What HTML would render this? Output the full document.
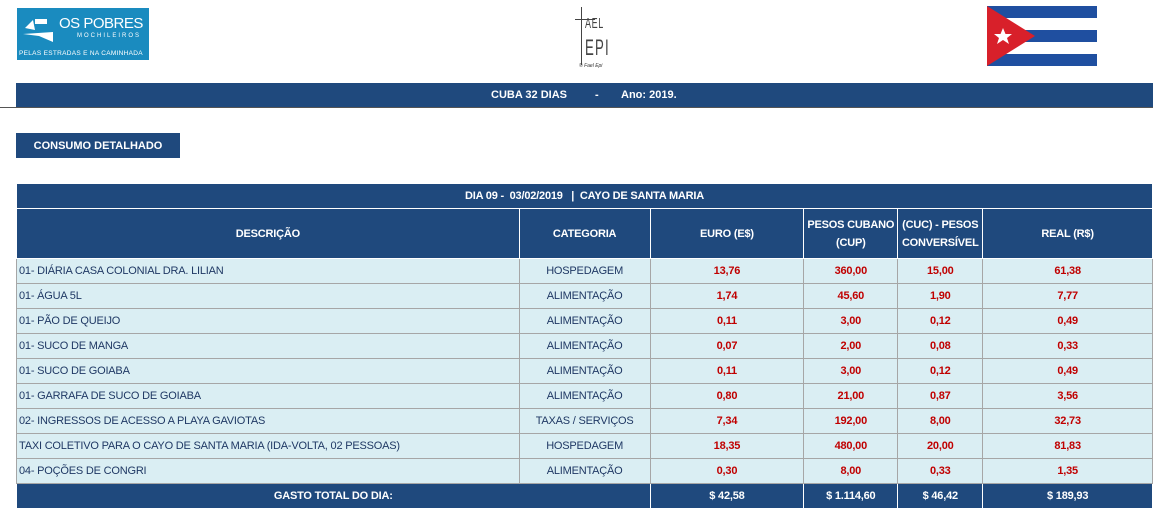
<!DOCTYPE html>
<html><head><meta charset="utf-8"><style>
body{margin:0;width:1153px;height:508px;background:#fff;position:relative;overflow:hidden;font-family:"Liberation Sans",sans-serif;font-size:11px;}
.abs{position:absolute}
.band{background:#1f497d;color:#fff;font-weight:bold;}
table{position:absolute;left:16px;top:183px;border-collapse:collapse;table-layout:fixed;}
td{border:1px solid #a6a6a6;height:24px;padding:0;color:#1f3864;text-align:center;white-space:nowrap;overflow:hidden;letter-spacing:-0.2px}
tr.d td{background:#daeef3}
tr.d td:first-child{text-align:left;padding-left:2px}
td.r{color:#c00000;font-weight:bold}
tr.h td{background:#1f497d;color:#fff;font-weight:bold;border-color:#fff}
</style></head><body>
<div class="abs" style="left:17px;top:8px;width:132px;height:52px;background:#1a8bbf;color:#fff">
 <svg class="abs" style="left:4px;top:8px" width="36" height="28"><polygon points="4,12 12,4 14,14" fill="#fff"/><rect x="14" y="3" width="12" height="5" fill="#fff"/><polygon points="2,18 32,16 32,26 18,20" fill="#fff"/></svg>
 <div class="abs" style="left:42px;top:7px;font-size:15px;letter-spacing:-0.5px">OS POBRES</div>
 <div class="abs" style="left:60px;top:25px;font-size:6px;letter-spacing:2px">MOCHILEIROS</div>
 <div class="abs" style="left:2px;top:42px;font-size:6.5px;letter-spacing:0.3px">PELAS ESTRADAS E NA CAMINHADA</div>
</div>
<div class="abs" style="left:575px;top:5px;width:40px;height:68px">
 <div class="abs" style="left:6px;top:2px;width:1px;height:58px;background:#444"></div>
 <div class="abs" style="left:0;top:14px;width:20px;height:1px;background:#444"></div>
 <div class="abs" style="left:10px;top:10px;font-size:15px;color:#444;letter-spacing:1px;font-weight:100;transform:scaleX(.6);transform-origin:left">AEL</div>
 <div class="abs" style="left:10px;top:30px;font-size:22px;color:#444;letter-spacing:2px;transform:scaleX(.6);transform-origin:left">EPI</div>
 <div class="abs" style="left:4px;top:58px;font-size:5px;color:#333;font-style:italic">© Fael Epi</div>
</div>
<svg class="abs" style="left:987px;top:6px" width="110" height="60" viewBox="0 0 110 60">
 <rect width="110" height="60" fill="#fff"/>
 <rect y="0" width="110" height="12" fill="#1f4fa0"/><rect y="24" width="110" height="12" fill="#1f4fa0"/><rect y="48" width="110" height="12" fill="#1f4fa0"/>
 <polygon points="0,0 48,30 0,60" fill="#d8202a"/>
 <polygon points="16,22 18.5,28 25,28 20,32 22,38 16,34 10,38 12,32 7,28 13.5,28" fill="#fff"/>
</svg>
<div class="abs band" style="left:16px;top:83px;width:1137px;height:24px;line-height:25px">
 <span class="abs" style="left:475px">CUBA 32 DIAS</span><span class="abs" style="left:579px">-</span><span class="abs" style="left:605px">Ano: 2019.</span>
</div>
<div class="abs" style="left:0;top:107px;width:1153px;height:1px;background:#555"></div>
<div class="abs band" style="left:16px;top:133px;width:164px;height:25px;line-height:26px;text-align:center">CONSUMO DETALHADO</div>
<table>
<colgroup><col style="width:503px"><col style="width:131px"><col style="width:154px"><col style="width:94px"><col style="width:85px"><col style="width:170px"></colgroup>
<tr class="h"><td colspan="6">DIA 09 -&nbsp; 03/02/2019 &nbsp; | &nbsp;CAYO DE SANTA MARIA</td></tr>
<tr class="h"><td style="height:49px">DESCRIÇÃO</td><td>CATEGORIA</td><td>EURO (E$)</td><td style="line-height:18px">PESOS CUBANO<br>(CUP)</td><td style="line-height:18px">(CUC) - PESOS<br>CONVERSÍVEL</td><td>REAL (R$)</td></tr>
<tr class="d"><td>01- DIÁRIA CASA COLONIAL DRA. LILIAN</td><td>HOSPEDAGEM</td><td class="r">13,76</td><td class="r">360,00</td><td class="r">15,00</td><td class="r">61,38</td></tr>
<tr class="d"><td>01- ÁGUA 5L</td><td>ALIMENTAÇÃO</td><td class="r">1,74</td><td class="r">45,60</td><td class="r">1,90</td><td class="r">7,77</td></tr>
<tr class="d"><td>01- PÃO DE QUEIJO</td><td>ALIMENTAÇÃO</td><td class="r">0,11</td><td class="r">3,00</td><td class="r">0,12</td><td class="r">0,49</td></tr>
<tr class="d"><td>01- SUCO DE MANGA</td><td>ALIMENTAÇÃO</td><td class="r">0,07</td><td class="r">2,00</td><td class="r">0,08</td><td class="r">0,33</td></tr>
<tr class="d"><td>01- SUCO DE GOIABA</td><td>ALIMENTAÇÃO</td><td class="r">0,11</td><td class="r">3,00</td><td class="r">0,12</td><td class="r">0,49</td></tr>
<tr class="d"><td>01- GARRAFA DE SUCO DE GOIABA</td><td>ALIMENTAÇÃO</td><td class="r">0,80</td><td class="r">21,00</td><td class="r">0,87</td><td class="r">3,56</td></tr>
<tr class="d"><td>02- INGRESSOS DE ACESSO A PLAYA GAVIOTAS</td><td>TAXAS / SERVIÇOS</td><td class="r">7,34</td><td class="r">192,00</td><td class="r">8,00</td><td class="r">32,73</td></tr>
<tr class="d"><td>TAXI COLETIVO PARA O CAYO DE SANTA MARIA (IDA-VOLTA, 02 PESSOAS)</td><td>HOSPEDAGEM</td><td class="r">18,35</td><td class="r">480,00</td><td class="r">20,00</td><td class="r">81,83</td></tr>
<tr class="d"><td>04- POÇÕES DE CONGRI</td><td>ALIMENTAÇÃO</td><td class="r">0,30</td><td class="r">8,00</td><td class="r">0,33</td><td class="r">1,35</td></tr>
<tr class="h"><td colspan="2">GASTO TOTAL DO DIA:</td><td>$ 42,58</td><td>$ 1.114,60</td><td>$ 46,42</td><td>$ 189,93</td></tr>
</table>
</body></html>
